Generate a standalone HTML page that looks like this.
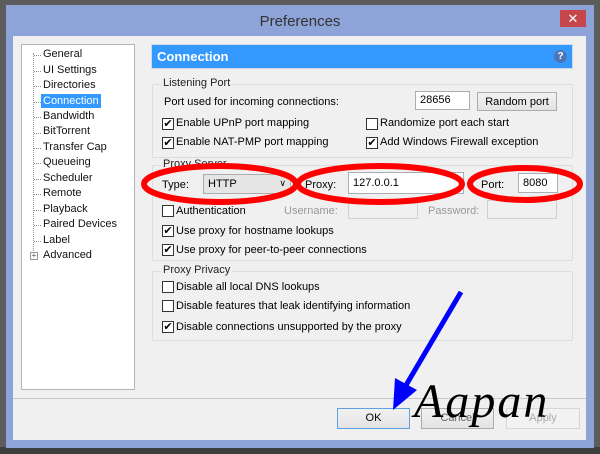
<!DOCTYPE html>
<html><head><style>
*{margin:0;padding:0;box-sizing:border-box}
body{width:600px;height:454px;background:#5c5c5c;position:relative;overflow:hidden;font-family:"Liberation Sans",sans-serif;font-size:11px;color:#000}
.a{position:absolute;white-space:nowrap}
.cb{position:absolute;width:12px;height:12px;border:1px solid #333;background:#fff;font-size:11px;line-height:10px;text-align:center}
.box{position:absolute;border:1px solid #dcdcdc;border-radius:2px}
.lg{position:absolute;background:#f0f0f0;padding:0 2px;top:-8px;left:8px;color:#222}
.in{position:absolute;background:#fff;border:1px solid #abadb3;padding:2px 4px}
.btn{position:absolute;background:linear-gradient(#f2f2f2,#e3e3e3);border:1px solid #acacac;text-align:center;line-height:19px}
.ti{position:absolute;left:43px;color:#111}
.dl{position:absolute;left:34px;width:7px;border-top:1px dotted #888}
</style></head><body>
<div class="a" style="left:0;top:447px;width:600px;height:7px;background:#3e3e3e"></div>
<div class="a" style="left:6px;top:5px;width:588px;height:443px;background:#8ea3d8"></div>
<div class="a" style="top:13px;width:300px;font-size:15px;color:#333;text-align:center;left:150px">Preferences</div>
<div class="a" style="left:560px;top:10px;width:26px;height:17px;background:#c7464b;color:#fff;text-align:center;font-size:13px;line-height:17px">✕</div>
<div class="a" style="left:13px;top:36px;width:573px;height:404px;background:#f0f0f0"></div>
<!-- tree -->
<div class="a" style="left:21px;top:44px;width:114px;height:346px;background:#fff;border:1px solid #b4b4b4"></div>
<div class="a" style="left:33px;top:53px;height:202px;border-left:1px dotted #999"></div>
<div class="dl" style="top:55px"></div><div class="ti" style="top:48px">General</div>
<div class="dl" style="top:71px"></div><div class="ti" style="top:64px">UI Settings</div>
<div class="dl" style="top:86px"></div><div class="ti" style="top:79px">Directories</div>
<div class="dl" style="top:102px"></div><div class="ti" style="top:94px;left:41px;background:#3399ff;color:#fff;padding:1px 2px">Connection</div>
<div class="dl" style="top:117px"></div><div class="ti" style="top:110px">Bandwidth</div>
<div class="dl" style="top:133px"></div><div class="ti" style="top:125px">BitTorrent</div>
<div class="dl" style="top:148px"></div><div class="ti" style="top:141px">Transfer Cap</div>
<div class="dl" style="top:163px"></div><div class="ti" style="top:156px">Queueing</div>
<div class="dl" style="top:179px"></div><div class="ti" style="top:172px">Scheduler</div>
<div class="dl" style="top:194px"></div><div class="ti" style="top:187px">Remote</div>
<div class="dl" style="top:210px"></div><div class="ti" style="top:203px">Playback</div>
<div class="dl" style="top:225px"></div><div class="ti" style="top:218px">Paired Devices</div>
<div class="dl" style="top:241px"></div><div class="ti" style="top:234px">Label</div>
<div class="a" style="left:30px;top:252px;width:8px;height:8px;border:1px solid #999;background:#fff;font-size:8px;line-height:6px;text-align:center;color:#456">+</div>
<div class="ti" style="top:249px">Advanced</div>
<!-- header -->
<div class="a" style="left:151px;top:44px;width:422px;height:25px;background:#3399ff;border:1px solid #cfd8e8"></div>
<div class="a" style="left:157px;top:49px;color:#fff;font-size:13px;font-weight:bold">Connection</div>
<div class="a" style="left:554px;top:50px;width:13px;height:13px;border-radius:50%;background:#4e74b8;color:#fff;font-size:10px;text-align:center;line-height:13px;font-weight:bold">?</div>
<!-- listening -->
<div class="box" style="left:152px;top:84px;width:421px;height:74px"><span class="lg">Listening Port</span></div>
<div class="a" style="left:164px;top:96px">Port used for incoming connections:</div>
<div class="in" style="left:415px;top:91px;width:55px;height:19px">28656</div>
<div class="btn" style="left:477px;top:92px;width:80px;height:19px">Random port</div>
<div class="cb" style="left:162px;top:118px">✔</div><div class="a" style="left:176px;top:117px">Enable UPnP port mapping</div>
<div class="cb" style="left:162px;top:137px">✔</div><div class="a" style="left:176px;top:136px">Enable NAT-PMP port mapping</div>
<div class="cb" style="left:366px;top:118px"></div><div class="a" style="left:380px;top:117px">Randomize port each start</div>
<div class="cb" style="left:366px;top:137px">✔</div><div class="a" style="left:380px;top:136px">Add Windows Firewall exception</div>
<!-- proxy server -->
<div class="box" style="left:152px;top:165px;width:421px;height:96px"><span class="lg">Proxy Server</span></div>
<div class="a" style="left:162px;top:179px">Type:</div>
<div class="a" style="left:203px;top:174px;width:88px;height:20px;background:#e5e5e5;border:1px solid #acacac;padding:3px 4px">HTTP<span style="position:absolute;right:4px;top:3px;font-size:9px">∨</span></div>
<div class="a" style="left:305px;top:179px">Proxy:</div>
<div class="in" style="left:348px;top:172px;width:116px;height:22px;padding-top:4px">127.0.0.1</div>
<div class="a" style="left:481px;top:179px">Port:</div>
<div class="in" style="left:518px;top:173px;width:40px;height:20px;padding-top:3px">8080</div>
<div class="cb" style="left:162px;top:205px"></div><div class="a" style="left:176px;top:205px">Authentication</div>
<div class="a" style="left:284px;top:205px;color:#999">Username:</div>
<div class="a" style="left:348px;top:200px;width:70px;height:19px;border:1px solid #d0d0d0"></div>
<div class="a" style="left:428px;top:205px;color:#999">Password:</div>
<div class="a" style="left:487px;top:200px;width:70px;height:19px;border:1px solid #d0d0d0"></div>
<div class="cb" style="left:162px;top:225px">✔</div><div class="a" style="left:176px;top:225px">Use proxy for hostname lookups</div>
<div class="cb" style="left:162px;top:244px">✔</div><div class="a" style="left:176px;top:244px">Use proxy for peer-to-peer connections</div>
<!-- privacy -->
<div class="box" style="left:152px;top:271px;width:421px;height:70px"><span class="lg">Proxy Privacy</span></div>
<div class="cb" style="left:162px;top:281px"></div><div class="a" style="left:176px;top:281px">Disable all local DNS lookups</div>
<div class="cb" style="left:162px;top:300px"></div><div class="a" style="left:176px;top:300px">Disable features that leak identifying information</div>
<div class="cb" style="left:162px;top:321px">✔</div><div class="a" style="left:176px;top:321px">Disable connections unsupported by the proxy</div>
<!-- bottom -->
<div class="a" style="left:13px;top:398px;width:573px;border-top:1px solid #c8c8c8"></div>
<div class="btn" style="left:337px;top:408px;width:73px;height:21px;border-color:#5fa2e0">OK</div>
<div class="btn" style="left:421px;top:408px;width:73px;height:21px;color:#666">Cancel</div>
<div class="btn" style="left:506px;top:408px;width:74px;height:21px;color:#aaa;background:#f2f2f2;border-color:#d6d6d6">Apply</div>
<!-- annotations -->
<svg class="a" style="left:0;top:0" width="600" height="454">
<ellipse cx="220" cy="184" rx="76" ry="18" fill="none" stroke="#f00" stroke-width="6"/>
<ellipse cx="380" cy="184" rx="82" ry="18" fill="none" stroke="#f00" stroke-width="6"/>
<ellipse cx="525" cy="184" rx="55" ry="16" fill="none" stroke="#f00" stroke-width="6"/>
<line x1="461" y1="292" x2="402" y2="392" stroke="#00f" stroke-width="5"/>
<polygon points="393,410 395,378 417,390" fill="#00f"/>
</svg>
<div class="a" style="left:414px;top:374px;font-family:'Liberation Serif',serif;font-style:italic;font-size:48px;color:#000;letter-spacing:2px">Aapan</div>
</body></html>
